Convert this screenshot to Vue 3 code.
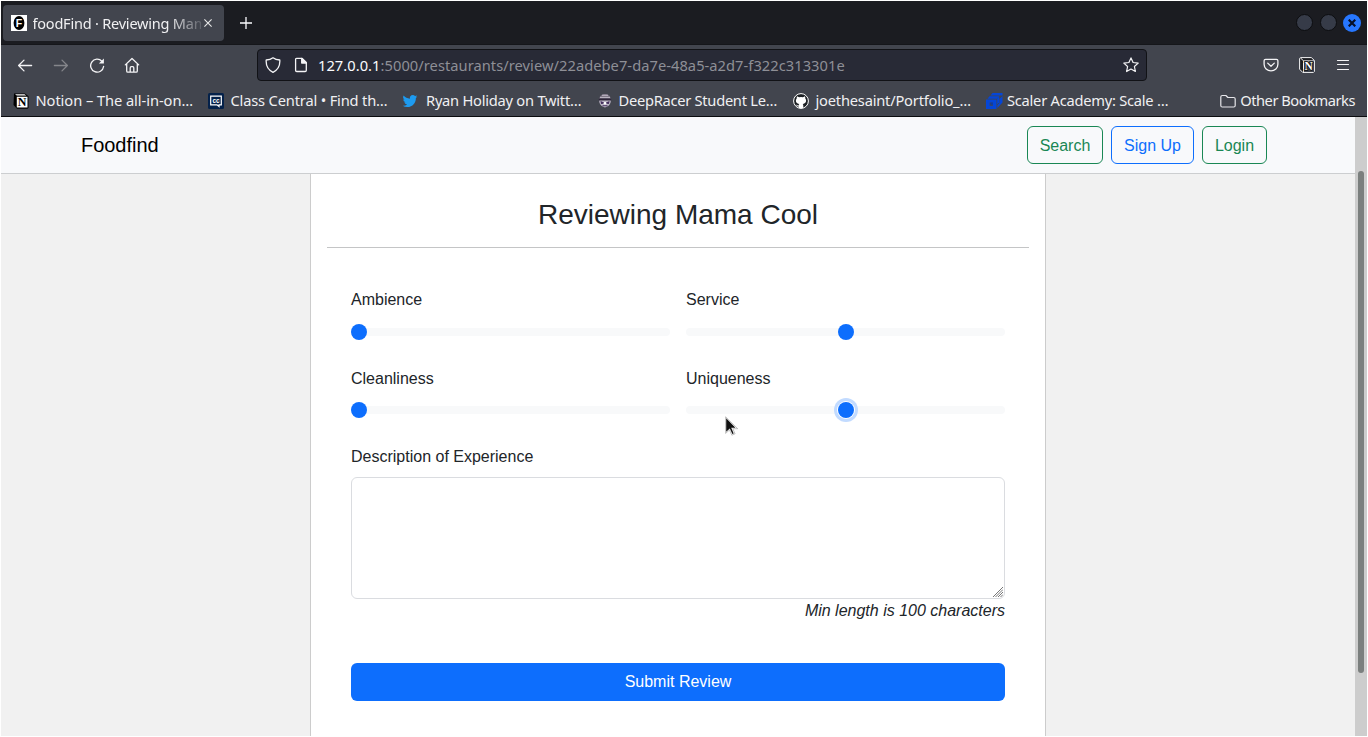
<script setup>
const bookmarks = [
  { icon: 'notion', label: 'Notion – The all-in-on…', cls: 'b1' },
  { icon: 'cc', label: 'Class Central • Find th…', cls: 'b2' },
  { icon: 'twitter', label: 'Ryan Holiday on Twitt…', cls: 'b3' },
  { icon: 'racer', label: 'DeepRacer Student Le…', cls: 'b4' },
  { icon: 'github', label: 'joethesaint/Portfolio_…', cls: 'b5' },
  { icon: 'scaler', label: 'Scaler Academy: Scale …', cls: 'b6' },
]
const ratings = [
  { name: 'Ambience', value: 0 },
  { name: 'Service', value: 50 },
  { name: 'Cleanliness', value: 0 },
  { name: 'Uniqueness', value: 50, focused: true },
]
</script>

<template>
  <div class="window">
    <div class="tabs">
      <div class="tab">
        <svg class="fav" width="16" height="16" viewBox="0 0 16 16">
          <rect width="16" height="16" fill="#fff" />
          <ellipse cx="8" cy="8" rx="5.4" ry="7" fill="#000" />
          <text x="4.8" y="11.9" font-family="Liberation Sans, sans-serif" font-size="10.5" font-weight="bold" fill="#fff">F</text>
        </svg>
        <span class="tab-title">foodFind · Reviewing Mam</span>
        <svg class="tab-close" width="8" height="8" viewBox="0 0 8 8" fill="none" stroke="#e8e8e8" stroke-width="1.1"><path d="M.4.4l7.2 7.2M7.6.4L.4 7.6" /></svg>
      </div>
      <svg class="new-tab" width="12" height="12" viewBox="0 0 12 12" stroke="#fbfbfe" stroke-width="1.3"><path d="M6 0v12M0 6h12" /></svg>
      <div class="win-buttons">
        <i class="wb"></i><i class="wb"></i>
        <i class="wb close"><svg width="8" height="8" viewBox="0 0 8 8" stroke="#06102a" stroke-width="2.2"><path d="M.7.7l6.6 6.6M7.3.7L.7 7.3" /></svg></i>
      </div>
    </div>

    <div class="toolbar">
      <div class="nav-icons">
        <svg width="16" height="16" viewBox="0 0 16 16" fill="none" stroke="#f4f4f6" stroke-width="1.3" stroke-linecap="round" stroke-linejoin="round"><path d="M1.6 8.500h13M7 3.100L1.600 8.500 7 13.900" /></svg>
        <svg width="16" height="16" viewBox="0 0 16 16" fill="none" stroke="#85868b" stroke-width="1.3" stroke-linecap="round" stroke-linejoin="round"><path d="M1.400 8.500h13M9 3.100L14.400 8.500 9 13.900" /></svg>
        <svg width="16" height="16" viewBox="0 0 16 16" fill="none" stroke="#f4f4f6" stroke-width="1.35" stroke-linecap="round"><path d="M12.900 4.200A6.500 6.500 0 1 0 14.600 9.500" /><path d="M14.900 1.500v5H9.900z" fill="#f4f4f6" stroke="none" /></svg>
        <svg class="home" width="16" height="16" viewBox="0 0 16 16" fill="none" stroke="#f4f4f6" stroke-width="1.3" stroke-linecap="round" stroke-linejoin="round"><path d="M1.300 7.900L8 1.500l6.700 6.400M2.700 6.900v7.100c0 .8.400 1.200 1.200 1.200h8.200c.8 0 1.200-.4 1.200-1.200V6.900M6.200 14.900v-4c0-.8.400-1.200 1.100-1.200h1.400c.7 0 1.100.4 1.100 1.200v4" /></svg>
      </div>
      <div class="urlbar">
        <svg width="16" height="16" viewBox="0 0 16 16" fill="none" stroke="#f4f4f6" stroke-width="1.3" stroke-linejoin="round"><path d="M8 .8C6.300 2.200 3.700 3 1.200 3c-.4 5.600 1.300 9.700 6.800 12.300C13.500 12.700 15.200 8.600 14.800 3 12.300 3 9.700 2.200 8 .8z" /></svg>
        <svg class="page" width="16" height="16" viewBox="0 0 16 16" fill="none" stroke="#f4f4f6" stroke-width="1.3" stroke-linejoin="round"><path d="M3.600 1.400h5.600l4.100 4.100v7.800c0 .8-.4 1.200-1.200 1.200H3.800c-.8 0-1.200-.4-1.200-1.200V2.500c0-.7.300-1.100 1-1.100z" /><path d="M8.700 1.400v4.700h4.700z" fill="#f4f4f6" /></svg>
        <span class="url"><b>127.0.0.1</b>:5000/restaurants/review/22adebe7-da7e-48a5-a2d7-f322c313301e</span>
        <svg class="star" width="16" height="16" viewBox="0 0 16 16" fill="none" stroke="#f4f4f6" stroke-width="1.2" stroke-linejoin="round"><path d="M8 .9l2.100 4.600 5.100.6-3.800 3.400 1 5L8 12l-4.400 2.500 1-5L.8 6.100l5.100-.6z" /></svg>
      </div>
      <div class="tools">
        <svg width="16" height="16" viewBox="0 0 16 16" fill="none" stroke="#f4f4f6" stroke-width="1.3" stroke-linecap="round" stroke-linejoin="round"><path d="M2.600 2.400h10.800c.9 0 1.500.5 1.500 1.400v3.500a6.900 6.600 0 0 1-13.800 0V3.800c0-.9.600-1.400 1.500-1.400z" /><path d="M4.700 6.100L8 9.200l3.300-3.100" /></svg>
        <svg width="16" height="16" viewBox="0 0 16 16"><path d="M1.500.6h10.800l3.100 2.900v11l-1 1H3.800L.6 12.200V1.500z" fill="#1c1d21" stroke="#f4f4f6" /><path d="M4.500 4.200h10.400v10.900H4.500z" fill="#42454e" /><path d="M1.500.9l3 3v11M4.500 3.900h10.600" fill="none" stroke="#f4f4f6" /><text x="5.400" y="13.300" font-family="Liberation Serif, serif" font-size="11.500" font-weight="bold" fill="#fff" stroke="#111" stroke-width="1.600" paint-order="stroke">N</text></svg>
        <svg class="menu" width="14" height="16" viewBox="0 0 14 16" stroke="#f4f4f6" stroke-width="1.200" stroke-linecap="round"><path d="M1.500 3.500h11M1.500 7.500h11M1.500 12.500h11" /></svg>
      </div>
    </div>

    <div class="bookmarks">
      <div v-for="b in bookmarks" :key="b.icon" class="bookmark" :class="b.cls">
        <svg v-if="b.icon === 'notion'" width="16" height="16" viewBox="0 0 16 16"><path d="M1 .5h11l3.500 2.800V15L14.500 15.800H4L.5 12z" fill="#000" /><path d="M3.800 3.800h10.700v10.800H3.800zM2 1.300h9.500l1.800 1.300H3.800z" fill="#fff" /><text x="4.700" y="13.200" font-family="Liberation Serif, serif" font-size="12" font-weight="bold" fill="#000">N</text></svg>
        <svg v-else-if="b.icon === 'cc'" width="16" height="16" viewBox="0 0 16 16"><rect width="16" height="16" rx="1.500" fill="#04214a" /><path d="M2.700 3.200h10.600v8.600H11v1.600l-2-1.600H2.700z" fill="none" stroke="#fff" stroke-width="1.200" /><text x="4.500" y="9.700" font-family="Liberation Sans, sans-serif" font-size="6.500" font-weight="bold" fill="#fff">cc</text></svg>
        <svg v-else-if="b.icon === 'twitter'" width="16" height="16" viewBox="-1 -1 26 26"><path fill="#1d9bf0" d="M23.950 4.570a10 10 0 0 1-2.820.78 4.960 4.960 0 0 0 2.160-2.730c-.95.560-2 .96-3.130 1.190a4.920 4.920 0 0 0-8.380 4.480C7.690 8.100 4.070 6.130 1.640 3.160a4.920 4.920 0 0 0 1.520 6.570 4.900 4.900 0 0 1-2.230-.62v.06a4.920 4.920 0 0 0 3.950 4.830 5 5 0 0 1-2.210.08 4.940 4.940 0 0 0 4.600 3.420A9.870 9.870 0 0 1 0 19.540a14 14 0 0 0 7.550 2.210c9.050 0 14-7.500 14-13.980l-.02-.64a10 10 0 0 0 2.420-2.560z" /></svg>
        <svg v-else-if="b.icon === 'racer'" width="14" height="16" viewBox="0 0 14 16"><path d="M1.300 6C1.500 2.800 4 1 7 1s5.500 1.800 5.700 5z" fill="#777080" /><path d="M4 2.300h6M2 4.400h10" stroke="#c0bac6" /><rect x=".8" y="5.500" width="12.400" height="2.200" rx="1" fill="#2d2438" /><path d="M1.300 7.600h11.400c.3 2.800-1.300 5.800-5.700 6.800-4.400-1-6-4-5.700-6.800z" fill="#bdb6c6" /><path d="M2.500 8l3.500 1.500v1.300L3 11zM11.500 8L8 9.500v1.300l3 .2zM4.500 12.200h5v1h-5z" fill="#44305e" /><circle cx="7" cy="10.300" r="1.300" fill="#fff" /></svg>
        <svg v-else-if="b.icon === 'github'" width="16" height="16" viewBox="0 0 16 16"><circle cx="8" cy="8" r="7.400" fill="#1b1f23" stroke="#fff" stroke-width="1" /><path fill="#fff" d="M4 3.200l2.100 1.100a8 8 0 0 1 3.800 0L12 3.200c.4.900.4 1.600.2 2.100 2 2.700.5 5.400-2.500 5.700.5.500.6 1 .6 1.800v2.300a7 7 0 0 1-4.600 0v-1.700c-1.300.3-2-.3-2.500-1.300l-.6-.5c1.500-.1 1.300 1.300 3.100.8 0-.6.200-1 .6-1.400-3-.3-4.500-3-2.500-5.700-.2-.5-.2-1.200.2-2.100z" /></svg>
        <svg v-else width="17" height="16" viewBox="0 0 17 16"><path d="M0 6.500h10.500V16H0z" fill="#0546d7" /><path d="M3.600 9.600h3.200v3.200H3.600z" fill="#42454e" /><path d="M4.500 9.600h2.300v2.200H4.500z" fill="#0a3aa8" /><path d="M6.500 0h10v2.500h-12zM3.500 3.300h9.700l-2 2.400H1.500z" fill="#0546d7" /><path d="M16.500 3v6.500L11.300 15V12.300l2.200-2.400V5.700z" fill="#0546d7" /><path d="M13.200 3.300v5.900l-2 2.300V5.700z" fill="#0546d7" /></svg>
        <span>{{ b.label }}</span>
      </div>
      <div class="bookmark other">
        <svg width="16" height="16" viewBox="0 0 16 16" fill="none" stroke="#e6e6ea" stroke-width="1.200" stroke-linejoin="round"><path d="M2.300 2.500h3.600l2 2h5.800c1 0 1.500.5 1.500 1.500v6.500c0 1-.5 1.500-1.500 1.500H2.300c-1 0-1.500-.5-1.500-1.500V4c0-1 .5-1.500 1.500-1.500z" /></svg>
        <span>Other Bookmarks</span>
      </div>
    </div>

    <div class="viewport">
      <div class="site">
        <header class="navbar">
          <span class="brand">Foodfind</span>
          <button class="btn green search">Search</button>
          <button class="btn blue signup">Sign Up</button>
          <button class="btn green login">Login</button>
        </header>
        <main class="card">
          <h1>Reviewing Mama Cool</h1>
          <form class="form" @submit.prevent>
            <div class="ratings">
              <div v-for="r in ratings" :key="r.name" class="rating">
                <label>{{ r.name }}</label>
                <div class="range">
                  <div class="track"></div>
                  <div class="thumb" :class="{ focused: r.focused }" :style="{ left: `calc((100% - 16px) * ${r.value / 100})` }"></div>
                </div>
              </div>
            </div>
            <label class="desc-label">Description of Experience</label>
            <div class="area">
              <textarea></textarea>
              <svg class="grip" width="10" height="10" viewBox="0 0 10 10" stroke="#777" stroke-width="1"><path d="M0 10L10 0M2.500 10l7.500-7.500M5 10l5-5M7.500 10l2.500-2.500" /></svg>
            </div>
            <em>Min length is 100 characters</em>
            <button class="submit">Submit Review</button>
          </form>
        </main>
      </div>
      <div class="scrollbar"><div class="scroll-thumb"></div></div>
    </div>
    <svg class="cursor" width="14" height="21" viewBox="0 0 14 21"><path d="M.6.800v16.600l3.900-3.500 2.300 5.300 3.300-1.400-2.300-5.100h4.900z" fill="#fff" stroke="#999" stroke-width=".6" /><path d="M1.200 2.200v13.500l3.600-3.300 2.600 5.700 1.300-.6-2.500-5.700h4.200z" fill="#111" /></svg>
  </div>
</template>

<style>
body { background: #fff; overflow: hidden; }
</style>

<style scoped>
* { box-sizing: border-box; }
.window { width: 1368px; height: 737px; padding: 1px; background: #fff; display: flex; flex-direction: column; position: relative; font-family: "Noto Sans", sans-serif; font-size: 14.67px; color: #f0f0f2; }
svg { display: block; flex: none; }
.tabs { height: 44px; background: #1b1c21; border-bottom: 1px solid #15161a; display: flex; align-items: center; flex: none; }
.tab { width: 221px; height: 36px; margin-left: 2px; border-radius: 4px; background: #42454e; display: flex; align-items: center; padding-left: 8px; }
.tab-title { width: 168px; margin-left: 5.500px; white-space: nowrap; font-size: 14.500px; letter-spacing: -.21px; -webkit-mask-image: linear-gradient(to right, #000 136px, transparent 174px); mask-image: linear-gradient(to right, #000 136px, transparent 174px); }
.tab-close { margin-left: 3px; }
.new-tab { margin-left: 16px; }
.win-buttons { margin: 0 6px 0 auto; display: flex; gap: 7px; }
.wb { width: 17px; height: 17px; border-radius: 50%; background: #363b48; border: 1px solid #0c0d10; display: flex; align-items: center; justify-content: center; }
.wb.close { width: 18px; height: 18px; margin-left: -1px; background: #2777ff; border: 0; }
.toolbar { height: 40px; flex: none; background: #42454e; display: flex; align-items: center; }
.nav-icons { display: flex; gap: 20px; margin-left: 16px; width: 240px; }
.home { margin-left: -1px; }
.urlbar { width: 890px; height: 32px; background: #282a36; border: 1px solid #111216; border-radius: 4px; display: flex; align-items: center; padding: 0 7px; }
.page { margin-left: 12px; }
.url { margin-left: 9px; color: #8e8f96; white-space: nowrap; letter-spacing: .05px; }
.url b { font-weight: 400; color: #fbfbfe; }
.star { margin-left: auto; }
.tools { display: flex; align-items: center; gap: 20px; margin-left: 116px; }
.menu { margin-left: 1px; }
.bookmarks { height: 32px; flex: none; background: #42454e; border-bottom: 1px solid #0b0c0f; display: flex; align-items: center; padding: 0 0 0 12px; }
.bookmark { display: flex; align-items: center; white-space: nowrap; gap: 6.500px; flex: none; letter-spacing: -.2px; }
.bookmark span { margin-top: -2px; }
.b1, .b2 { width: 195px; }
.b1 { letter-spacing: -.06px; }
.b2 { letter-spacing: -.17px; }
.b3 { width: 194px; margin-left: -1px; gap: 8px; letter-spacing: -.24px; }
.b4 { width: 195px; margin-left: 2px; letter-spacing: -.27px; }
.b5 { width: 193px; }
.b6 { width: 200px; gap: 4px; letter-spacing: -.24px; }
.other { margin: 0 0 0 auto; padding-right: 12px; gap: 4px; letter-spacing: -.47px; }
.viewport { flex: 1; min-height: 0; display: flex; font-family: "Liberation Sans", sans-serif; font-size: 16px; line-height: 24px; color: #212529; }
.site { flex: 1; background: #f1f1f1; display: flex; flex-direction: column; align-items: center; overflow: hidden; }
.navbar { width: 100%; height: 57px; flex: none; background: #f8f9fb; border-bottom: 1px solid #ccced0; display: flex; align-items: center; padding: 0 88px 0 80px; gap: 8px; }
.brand { font-size: 20px; color: #000; margin-right: auto; letter-spacing: -.03px; }
.btn { height: 38px; border: 1px solid; border-radius: 6px; background: transparent; font: 16px/24px "Liberation Sans", sans-serif; padding: 2px 0 0; }
.green { color: #198754; }
.blue { color: #0d6efd; }
.search { width: 76px; }
.signup { width: 83px; }
.login { width: 65px; }
.card { width: 736px; flex: 1; background: #fff; border: solid #ccc; border-width: 0 1px; padding: 24px 16px 0; }
h1 { margin: 0; height: 50px; font-size: 28px; line-height: 34px; font-weight: 400; text-align: center; border-bottom: 1px solid #c4c5c6; }
.form { padding: 40px 24px 0; display: flex; flex-direction: column; }
.ratings { display: grid; grid-template-columns: 1fr 1fr; column-gap: 16px; row-gap: 22.500px; }
.rating { display: flex; flex-direction: column; gap: 8px; }
.rating:nth-child(n + 3) { gap: 7.500px; }
.range { height: 24px; position: relative; display: flex; align-items: center; }
.track { flex: 1; height: 8px; border-radius: 8px; background: #f8f9fa; }
.thumb { position: absolute; top: 4px; width: 16px; height: 16px; border-radius: 50%; background: #0d6efd; }
.focused { box-shadow: 0 0 0 1px #fff, 0 0 0 4px #c2dbff; }
.desc-label { margin: 22.500px 0 8.500px; }
.area { position: relative; height: 122px; }
textarea { display: block; width: 100%; height: 100%; border: 1px solid #dadce0; border-radius: 6px; resize: none; outline: none; background: #fff; }
.grip { position: absolute; right: 2px; bottom: 2px; }
em { text-align: right; }
.submit { margin-top: 40px; height: 38px; border: 0; border-radius: 6px; background: #0d6efd; color: #fff; font: 16px/24px "Liberation Sans", sans-serif; }
.scrollbar { width: 12px; background: #cdcdcd; padding: 54px 3px 0; }
.scroll-thumb { height: 502px; width: 6px; border-radius: 3px; background: #7b7f7e; }
.cursor { position: absolute; left: 725px; top: 416px; }
</style>
